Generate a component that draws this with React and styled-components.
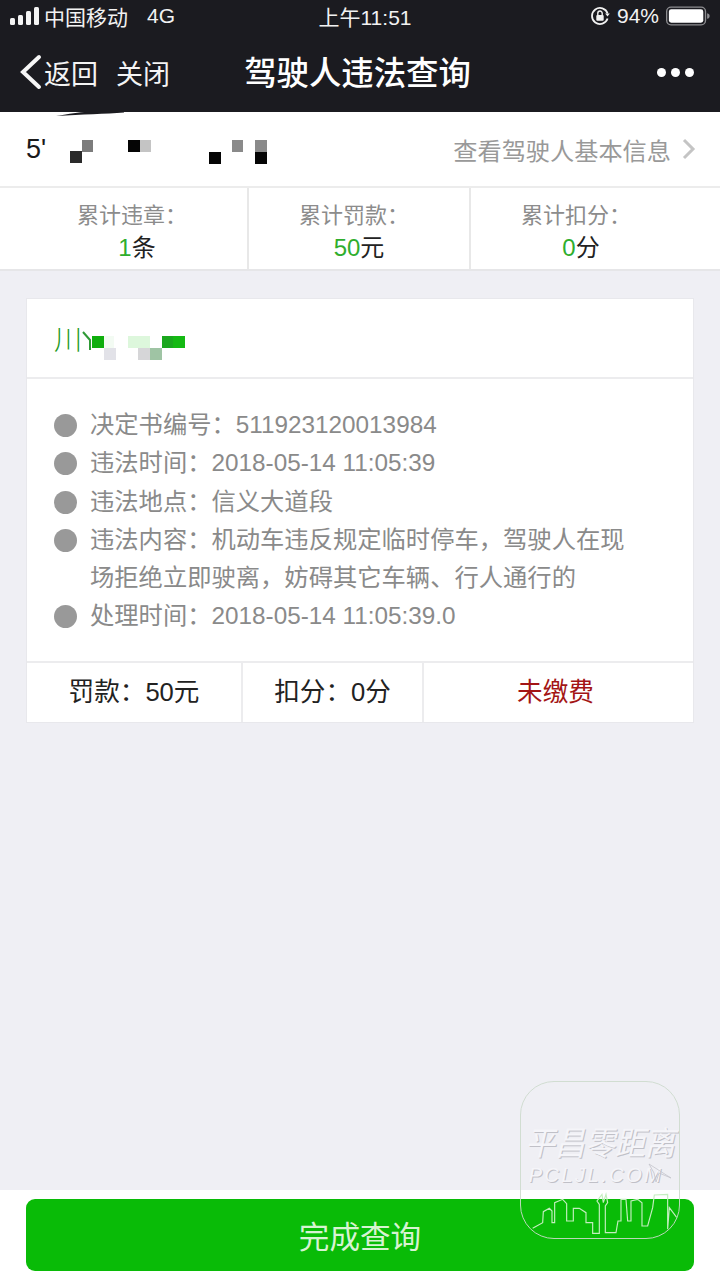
import React from 'react'
import styled, { createGlobalStyle } from 'styled-components'

const GlobalStyle = createGlobalStyle`
  html, body {
    margin: 0;
    padding: 0;
    background: #efeff4;
  }
  * { box-sizing: border-box; }
`

const Page = styled.div`
  position: relative;
  width: 720px;
  height: 1280px;
  display: flex;
  flex-direction: column;
  overflow: hidden;
  font-family: "Liberation Sans", "Noto Sans CJK SC", sans-serif;
  color: #222;
`

const Header = styled.header`
  height: 112px;
  background: #1b1b20;
  color: #fff;
  display: flex;
  flex-direction: column;
`

const StatusBar = styled.div`
  height: 36px;
  padding: 0 0 4px 10px;
  display: grid;
  grid-template-columns: 1fr auto 1fr;
  align-items: center;
  font-size: 21px;
  color: #f2f2f2;
`

const StatusLeft = styled.div`
  display: flex;
  align-items: center;
  gap: 5px;
`

const StatusRight = styled.div`
  display: flex;
  align-items: center;
  justify-content: flex-end;
  gap: 7px;
  padding-right: 10px;
`

const Network = styled.span`
  margin-left: 14px;
`

const NavBar = styled.div`
  flex: 1;
  display: grid;
  grid-template-columns: 1fr auto 1fr;
  align-items: center;
  padding: 0 26px 4px 18px;
`

const NavLeft = styled.div`
  display: flex;
  align-items: center;
  font-size: 27px;
  color: #f4f4f4;
`

const CloseLink = styled.span`
  margin-left: 18px;
`

const NavTitle = styled.div`
  font-size: 32.4px;
  font-weight: 500;
  margin: 0 0 3px 3px;
`

const NavMore = styled.div`
  display: flex;
  justify-content: flex-end;
  gap: 5px;
`

const Dot = styled.i`
  width: 9px;
  height: 9px;
  border-radius: 50%;
  background: #fff;
`

const OwnerRow = styled.div`
  position: relative;
  height: 76px;
  background: #fff;
  border-bottom: 2px solid #ececec;
  display: flex;
  align-items: center;
  justify-content: space-between;
  padding: 0 24px 0 26px;
`

const Smear = styled.svg`
  position: absolute;
  left: 56px;
  top: 0;
`

const OwnerId = styled.div`
  display: flex;
  align-items: center;
  font-size: 27px;
  color: #1a1a1a;
`

const OwnerLink = styled.div`
  display: flex;
  align-items: center;
  gap: 11px;
  font-size: 24.2px;
  color: #999;
`

const Stats = styled.div`
  height: 83px;
  background: #fff;
  border-bottom: 2px solid #e6e6e8;
  padding-left: 27px;
  display: grid;
  grid-template-columns: 220px 222px 222px;
`

const Stat = styled.div`
  display: flex;
  flex-direction: column;
  align-items: center;
  justify-content: center;
  font-size: 24px;
  line-height: 32px;
  color: #222;
  padding-top: 6px;
  & + & {
    border-left: 2px solid #e8e8e8;
  }
`

const StatLabel = styled.span`
  color: #8c8c8c;
  font-size: 22px;
  padding-right: 10px;
`

const Green = styled.span`
  color: #2fae2d;
`

const Body = styled.main`
  flex: 1;
  padding: 28px 27px 0;
  background: #efeff4;
`

const Card = styled.section`
  background: #fff;
  box-shadow: 0 0 0 1px #e8e8ec;
  width: 666px;
`

const Plate = styled.div`
  height: 80px;
  display: flex;
  align-items: center;
  padding: 0 0 0 27px;
  font-size: 28px;
  font-weight: 300;
  color: #1f9a1f;
  border-bottom: 2px solid #ececee;
`

const Details = styled.ul`
  list-style: none;
  margin: 0;
  padding: 27px 60px 25px 27px;
  border-bottom: 2px solid #ececee;
  font-size: 24.3px;
  line-height: 38.3px;
  color: #8a8a8a;
`

const Detail = styled.li`
  display: grid;
  grid-template-columns: 23px 1fr;
  column-gap: 13px;
`

const Bullet = styled.i`
  width: 23px;
  height: 23px;
  margin-top: 8px;
  border-radius: 50%;
  background: #999;
`

const CardFooter = styled.div`
  height: 59px;
  display: grid;
  grid-template-columns: 214px 181px 1fr;
  font-size: 25.6px;
`

const FooterCell = styled.div`
  display: flex;
  align-items: center;
  justify-content: center;
  padding: 0 ${props => props.$shift || 0}px 6px 0;
  color: ${props => props.$color || '#222'};
  & + & {
    border-left: 2px solid #ececee;
  }
`

const BottomBar = styled.footer`
  height: 90px;
  background: #fff;
  padding: 9px 26px;
`

const DoneButton = styled.button`
  display: block;
  width: 668px;
  height: 72px;
  border: 0;
  border-radius: 9px;
  background: #09bb07;
  color: #d7f3d2;
  font-family: inherit;
  font-size: 30.6px;
  cursor: pointer;
`

const Watermark = styled.div`
  position: absolute;
  left: 520px;
  top: 1081px;
  width: 160px;
  height: 158px;
  border: 1px solid rgba(205, 218, 205, 0.9);
  border-radius: 34px;
  overflow: hidden;
  display: flex;
  flex-direction: column;
  align-items: center;
  padding-top: 44px;
  color: #f5f5f9;
  font-style: italic;
  text-shadow: 1px 1px 0 #c0c0c7;
`

const MarkName = styled.div`
  font-size: 30px;
  line-height: 36px;
  white-space: nowrap;
  transform: scaleY(1.1);
`

const MarkUrl = styled.div`
  font-size: 20px;
  line-height: 26px;
  letter-spacing: 2.5px;
  margin-right: 8px;
`

const MarkArt = styled.svg`
  position: absolute;
  left: 0;
  top: 0;
`

const Mosaic = ({ width, height, cells, children, ...rest }) => (
  <svg width={width} height={height} viewBox={`0 0 ${width} ${height}`} {...rest}>
    {children}
    {cells.map(([x, y, w, h, fill], i) => (
      <rect key={i} x={x} y={y} width={w} height={h} fill={fill} />
    ))}
  </svg>
)

const IdMosaic = styled(Mosaic)`
  margin: 6px 0 0 24px;
`

const PlateMosaic = styled(Mosaic)`
  margin: 10px 0 0 0;
`

const idCells = [
  [0, 14, 12, 12, '#2a2a2a'],
  [12, 3, 11, 12, '#7c7c7c'],
  [58, 3, 12, 12, '#050505'],
  [70, 3, 11, 12, '#c4c4c4'],
  [139, 15, 12, 12, '#050505'],
  [162, 3, 11, 12, '#8a8a8a'],
  [185, 3, 12, 12, '#8a8a8a'],
  [185, 15, 12, 12, '#050505'],
]

const plateCells = [
  [10, 10, 12, 12, '#0fae0d'],
  [22, 10, 10, 12, '#f3fbf3'],
  [22, 22, 12, 12, '#e2e2e8'],
  [46, 10, 22, 12, '#ddf7dc'],
  [56, 22, 12, 12, '#d6d6d8'],
  [68, 22, 12, 12, '#9fc4a4'],
  [80, 10, 11, 12, '#1aa71e'],
  [91, 10, 12, 12, '#14b913'],
]

const Signal = () => (
  <svg width="29" height="20" viewBox="0 0 29 20">
    <rect x="0" y="12" width="5" height="7" rx="1.5" fill="#f4f4f4" />
    <rect x="8" y="9" width="5" height="10" rx="1.5" fill="#f4f4f4" />
    <rect x="16" y="5" width="5" height="14" rx="1.5" fill="#f4f4f4" />
    <rect x="24" y="1" width="5" height="18" rx="1.5" fill="#f4f4f4" />
  </svg>
)

const RotationLock = () => (
  <svg width="20" height="20" viewBox="0 0 20 20" fill="none">
    <path d="M17.6 7.5A8 8 0 1 0 17.6 12.5" stroke="#f2f2f2" strokeWidth="1.8" />
    <path d="M15.2 7.6h4.6l-2.3 3z" fill="#f2f2f2" />
    <rect x="6.3" y="9" width="7.4" height="5.8" rx="1" fill="#f2f2f2" />
    <path d="M7.8 9V7.2a2.2 2.2 0 0 1 4.4 0V9" stroke="#f2f2f2" strokeWidth="1.4" />
  </svg>
)

const Battery = () => (
  <svg width="44" height="20" viewBox="0 0 46 20" fill="none">
    <rect x="0.7" y="0.7" width="40.6" height="18.6" rx="4.5" stroke="#8d8d90" strokeWidth="1.4" />
    <rect x="3" y="3" width="36" height="14" rx="2.5" fill="#fff" />
    <path d="M43 7c2 .4 2.6 1.5 2.6 3s-.6 2.6-2.6 3z" fill="#8d8d90" />
  </svg>
)

const BackArrow = () => (
  <svg width="26" height="36" viewBox="0 0 26 36" fill="none">
    <path d="M21 3L5 18l16 15" stroke="#f6f6f6" strokeWidth="4" strokeLinecap="round" />
  </svg>
)

const Chevron = () => (
  <svg width="14" height="22" viewBox="0 0 14 22" fill="none">
    <path d="M2 2l9 9-9 9" stroke="#c4c4c4" strokeWidth="3" />
  </svg>
)

// full-width punctuation, as in the original copy
const COLON = '\uFF1A'
const COMMA = '\uFF0C'

const details = [
  `决定书编号${COLON}511923120013984`,
  `违法时间${COLON}2018-05-14 11:05:39`,
  `违法地点${COLON}信义大道段`,
  `违法内容${COLON}机动车违反规定临时停车${COMMA}驾驶人在现场拒绝立即驶离${COMMA}妨碍其它车辆、行人通行的`,
  `处理时间${COLON}2018-05-14 11:05:39.0`,
]

const App = () => (
  <Page>
    <GlobalStyle />
    <Header>
      <StatusBar>
        <StatusLeft>
          <Signal />
          <span>中国移动</span>
          <Network>4G</Network>
        </StatusLeft>
        <span>上午11:51</span>
        <StatusRight>
          <RotationLock />
          <span>94%</span>
          <Battery />
        </StatusRight>
      </StatusBar>
      <NavBar>
        <NavLeft>
          <BackArrow />
          <span>返回</span>
          <CloseLink>关闭</CloseLink>
        </NavLeft>
        <NavTitle>驾驶人违法查询</NavTitle>
        <NavMore>
          <Dot />
          <Dot />
          <Dot />
        </NavMore>
      </NavBar>
    </Header>

    <OwnerRow>
      <Smear width="68" height="5" viewBox="0 0 68 5">
        <path d="M0 4C14 2 22 0 32 0h36v.6C50 2 26 2.6 0 4z" fill="#1b1b20" />
      </Smear>
      <OwnerId>
        <span>5'</span>
        <IdMosaic width={198} height={30} cells={idCells} />
      </OwnerId>
      <OwnerLink>
        查看驾驶人基本信息
        <Chevron />
      </OwnerLink>
    </OwnerRow>

    <Stats>
      <Stat>
        <StatLabel>累计违章{COLON}</StatLabel>
        <span><Green>1</Green>条</span>
      </Stat>
      <Stat>
        <StatLabel>累计罚款{COLON}</StatLabel>
        <span><Green>50</Green>元</span>
      </Stat>
      <Stat>
        <StatLabel>累计扣分{COLON}</StatLabel>
        <span><Green>0</Green>分</span>
      </Stat>
    </Stats>

    <Body>
      <Card>
        <Plate>
          <span>川</span>
          <PlateMosaic width={103} height={34} cells={plateCells}>
            <path d="M1 6l7 8v10" fill="none" stroke="#2f9a36" strokeWidth="2" />
          </PlateMosaic>
        </Plate>
        <Details>
          {details.map(text => (
            <Detail key={text}>
              <Bullet />
              <span>{text}</span>
            </Detail>
          ))}
        </Details>
        <CardFooter>
          <FooterCell>罚款{COLON}50元</FooterCell>
          <FooterCell>扣分{COLON}0分</FooterCell>
          <FooterCell $color="#a31515" $shift={6}>未缴费</FooterCell>
        </CardFooter>
      </Card>
    </Body>

    <BottomBar>
      <DoneButton>完成查询</DoneButton>
    </BottomBar>

    <Watermark>
      <MarkName>平昌零距离</MarkName>
      <MarkUrl>PCLJL.COM</MarkUrl>
      <MarkArt width="160" height="158" viewBox="0 0 160 158" fill="none">
        <path d="M128 82l22 14-12-5-3 9-2-9z" stroke="#c4c4cb" strokeWidth="0.8" />
        <g transform="translate(-5 89) scale(0.3333)">
          <path
            d="M50 172L80 155 82 122 100 112 108 120 108 155 116 155 116 95 140 85 152 98 152 150 172 150 172 112 190 112 210 125 210 155 230 155 230 187 250 187 250 100 243 90 258 70 262 95 270 70 275 95 268 105 268 185 300 185 306 150 315 150 315 85 330 85 335 150 345 150 345 90 365 85 378 95 378 165 395 165 410 110 415 72 455 70 455 175 460 110 490 150 460 180"
            stroke="#c4eebf"
            strokeWidth="3.5"
          />
        </g>
      </MarkArt>
    </Watermark>
  </Page>
)

export default App
